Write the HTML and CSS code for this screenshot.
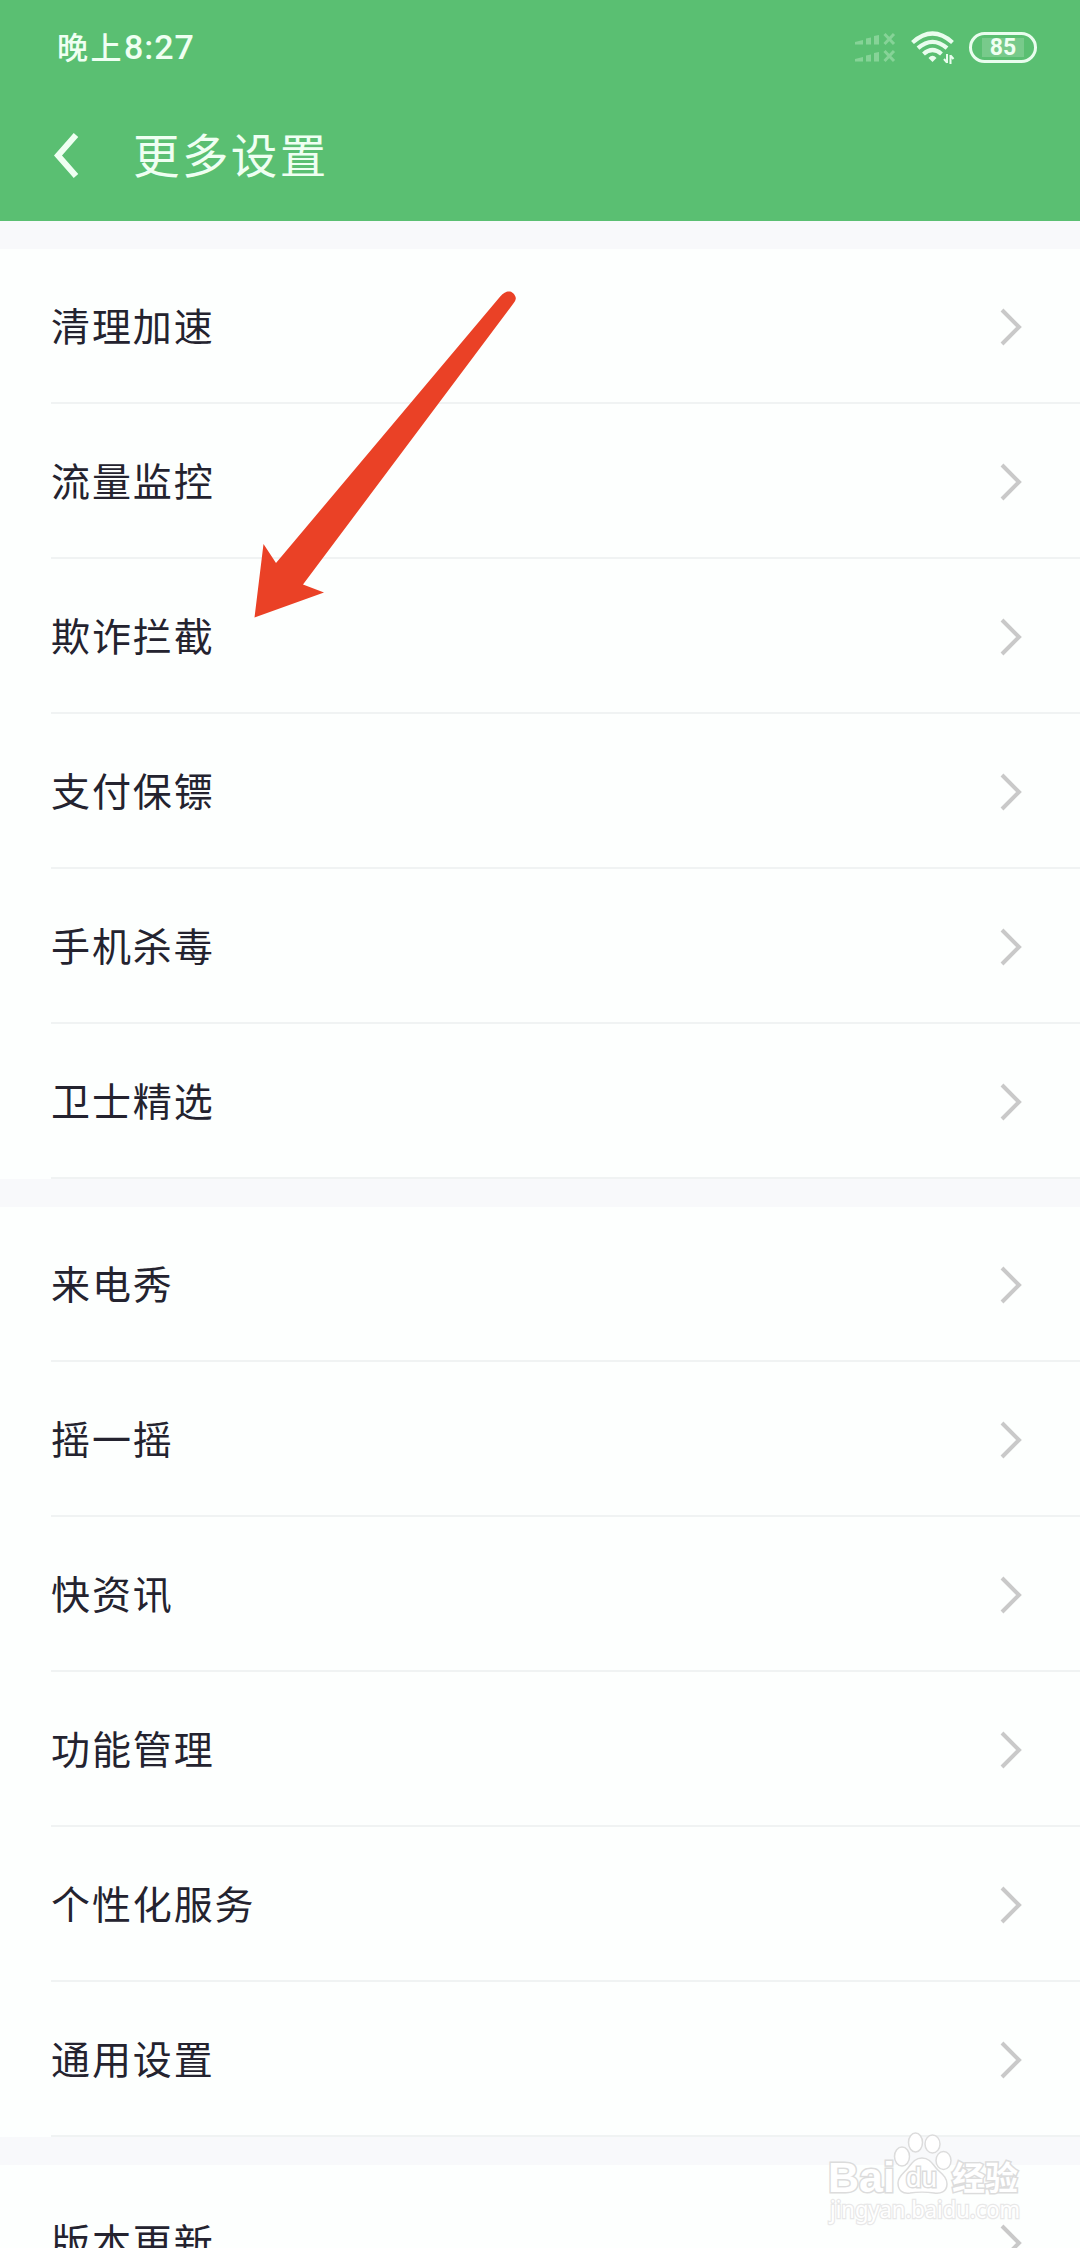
FILE: index.html
```html
<!DOCTYPE html>
<html lang="zh-CN">
  <head>
    <meta charset="UTF-8" />
    <title>更多设置</title>
    <meta name="viewport" content="width=device-width, initial-scale=1.0" />
    <link rel="stylesheet" href="styles.css">
  </head>
  <body>
    <svg class="defs" width="0" height="0">
      <symbol id="chevron" viewBox="0 0 24 40">
        <path d="M3 4 L20 21 L3 38" fill="none" stroke="#c9c9c9" stroke-width="4" />
      </symbol>
    </svg>

    <header class="header">
      <div class="status-bar">
        <div class="time">晚上<span>8:27</span></div>
        <div class="status-icons">
          <svg class="signal" width="42" height="32" viewBox="0 0 42 32">
            <g id="sim">
              <path d="M0 10 L8 8 V12.500 H0Z M11 6.500 L16 5.500 V12.500 H11Z M19 4 L24 3 V12.500 H19Z" />
              <path class="cross" d="M29.500 2 L39 12 M39 2 L29.500 12" />
            </g>
            <use href="#sim" y="17" />
          </svg>
          <svg class="wifi" width="44" height="34" viewBox="0 0 44 34">
            <g fill="none" stroke="#e9fdee" stroke-width="4.200">
              <path d="M1.500 11.500 Q21.500 -6.500 41.500 11.500" />
              <path d="M7 17.200 Q21.500 4.500 36 17.200" />
              <path d="M12.500 23 Q21.500 15 30.500 23" />
            </g>
            <path fill="#e9fdee" d="M17.500 27 Q21.500 22.500 25.500 27 L21.500 31Z" />
            <path class="arrows" d="M36 23 V32 M33 28 L36 31.500 M39.500 33 V24 M42.500 28 L39.500 24.500" />
          </svg>
          <div class="battery"><span>85</span></div>
        </div>
      </div>
      <div class="title-bar">
        <svg class="back" width="28" height="46" viewBox="0 0 28 46">
          <path d="M25 3 L7 23.500 L25 44" />
        </svg>
        <h1>更多设置</h1>
      </div>
    </header>

    <main>
      <ul class="group">
        <li><span>清理加速</span><svg><use href="#chevron" /></svg></li>
        <li><span>流量监控</span><svg><use href="#chevron" /></svg></li>
        <li><span>欺诈拦截</span><svg><use href="#chevron" /></svg></li>
        <li><span>支付保镖</span><svg><use href="#chevron" /></svg></li>
        <li><span>手机杀毒</span><svg><use href="#chevron" /></svg></li>
        <li><span>卫士精选</span><svg><use href="#chevron" /></svg></li>
      </ul>
      <ul class="group">
        <li><span>来电秀</span><svg><use href="#chevron" /></svg></li>
        <li><span>摇一摇</span><svg><use href="#chevron" /></svg></li>
        <li><span>快资讯</span><svg><use href="#chevron" /></svg></li>
        <li><span>功能管理</span><svg><use href="#chevron" /></svg></li>
        <li><span>个性化服务</span><svg><use href="#chevron" /></svg></li>
        <li><span>通用设置</span><svg><use href="#chevron" /></svg></li>
      </ul>
      <ul class="group">
        <li><span>版本更新</span><svg><use href="#chevron" /></svg></li>
      </ul>
    </main>

    <!-- 红色箭头 -->
    <svg class="pointer" width="270" height="330" viewBox="0 0 270 330">
      <path d="M4.500 326.500 L13.500 253 L26 272 L250 5.700 C254 1 257 0 260 0.500 C263 1 266 5 265.800 7.500 C265.500 9 265 10.500 263 13 L53 293.500 L74 301.500 Z" />
    </svg>

    <!-- 水印 -->
    <svg class="watermark" width="200" height="100" viewBox="0 0 200 100">
      <g class="paw">
        <ellipse cx="72" cy="26.500" rx="7.500" ry="9.500" />
        <ellipse cx="85.500" cy="12.500" rx="7" ry="9.500" />
        <ellipse cx="102.500" cy="14" rx="7.500" ry="9" />
        <ellipse cx="113.500" cy="30.500" rx="7.500" ry="9" />
        <path d="M92 28 C99 28 102 33 106 38 C110 43 117 46 117 54 C117 62 110 64 104 63 C98 62 86 62 80 63 C73 64 68 61 68 53 C68 46 74 43 78 38 C82 33 85 28 92 28Z" />
      </g>
      <text class="logo" x="-2" y="62" textLength="67" lengthAdjust="spacingAndGlyphs">Bai</text>
      <text class="du" x="76" y="57" textLength="31" lengthAdjust="spacingAndGlyphs">du</text>
      <text class="cn" x="122" y="60" textLength="66" lengthAdjust="spacingAndGlyphs">经验</text>
      <text class="url" x="0" y="88" textLength="190" lengthAdjust="spacingAndGlyphs">jingyan.baidu.com</text>
    </svg>
  </body>
</html>
```
FILE: styles.css
```css
* {
  box-sizing: border-box;
}
body {
  position: relative;
  margin: 0;
  height: 2248px;
  overflow: hidden;
  font-family: 'Noto Sans CJK SC', sans-serif;
  background-color: #f8f9fb;
  color: #24232f;
}
.defs {
  position: absolute;
}
.header {
  height: 221px;
  background-color: #5abf72;
  color: #effff2;
}
.status-bar {
  display: flex;
  justify-content: space-between;
  align-items: center;
  height: 95px;
  padding: 0 43px 0 57px;
}
.time {
  padding-bottom: 2px;
  font-size: 31px;
  font-weight: 500;
  letter-spacing: 2.500px;
  line-height: 40px;
}
.time span {
  font-family: Roboto, sans-serif;
  font-size: 34px;
  letter-spacing: 1px;
}
.status-icons {
  display: flex;
  align-items: center;
}
.signal {
  margin-right: 14px;
  fill: #86d397;
}
.signal .cross {
  stroke: #86d397;
  stroke-width: 3;
}
.wifi {
  margin-right: 14px;
}
.wifi .arrows {
  fill: none;
  stroke: #e9fdee;
  stroke-width: 2;
}
.battery {
  display: flex;
  justify-content: center;
  align-items: center;
  width: 68px;
  height: 31px;
  border: 3px solid #e9fdee;
  border-radius: 16px;
  font-family: Roboto, sans-serif;
  font-size: 23px;
  font-weight: bold;
}
.battery span {
  width: 42px;
  line-height: 19px;
  background-color: #78ca8b;
  text-align: center;
}
.title-bar {
  display: flex;
  align-items: center;
  height: 119px;
  padding-left: 51px;
}
.back path {
  fill: none;
  stroke: #effff2;
  stroke-width: 6;
}
h1 {
  margin: 0 0 0 54px;
  padding-bottom: 3px;
  font-size: 46.500px;
  font-weight: normal;
  letter-spacing: 2.400px;
  line-height: 60px;
}
.group {
  margin: 28px 0 0;
  padding: 0 0 0 51px;
  list-style: none;
  background-color: #fdfffe;
}
.group li {
  display: flex;
  justify-content: space-between;
  align-items: center;
  height: 155px;
  padding-right: 57px;
  border-bottom: 2px solid #f0f3f3;
  font-size: 39px;
  letter-spacing: 1.900px;
}
.group span {
  padding-bottom: 4px;
}
.group svg {
  width: 24px;
  height: 40px;
}
.pointer {
  position: absolute;
  left: 250px;
  top: 291px;
  fill: #ea4126;
}
.watermark {
  position: absolute;
  left: 830px;
  top: 2130px;
  overflow: visible;
  fill: #fff;
  stroke: #dcdcdc;
  stroke-width: 1.500;
}
.watermark text {
  paint-order: stroke;
  stroke-width: 3;
}
.watermark .logo {
  font: bold 43px 'Liberation Sans', sans-serif;
}
.watermark .du {
  font: 28px 'Liberation Sans', sans-serif;
}
.watermark .cn {
  font: bold 33px 'Noto Sans CJK SC', sans-serif;
}
.watermark .url {
  font: 23px 'Noto Sans', sans-serif;
  stroke: #e8e8e8;
  stroke-width: 2.500;
}
```
